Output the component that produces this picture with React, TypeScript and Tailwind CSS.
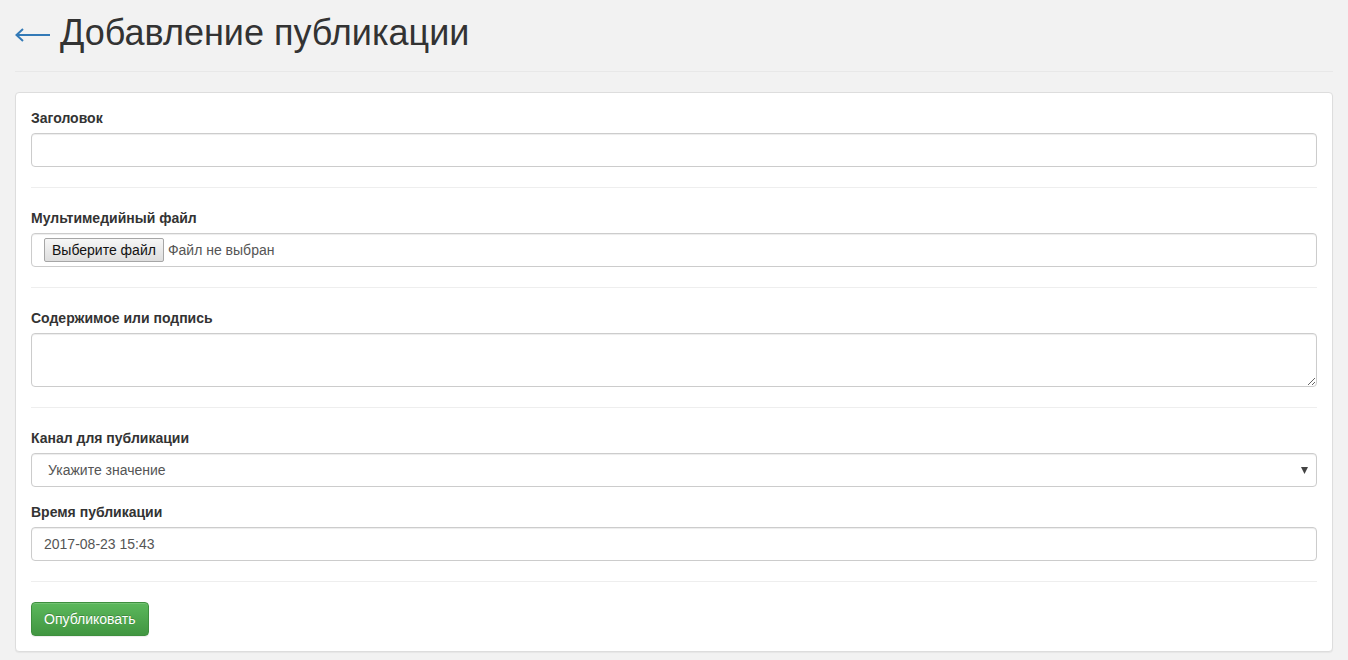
import { useState } from "react";

const inputCls =
  "block w-full h-[34px] px-3 text-[14px] text-[#555] bg-white border border-[#ccc] rounded-[4px] shadow-[inset_0_1px_1px_rgba(0,0,0,0.075)] outline-none focus:border-[#66afe9]";

const Label = ({ children }: { children: React.ReactNode }) => (
  <label className="block mb-[5px] text-[14px] leading-[20px] font-bold text-[#333]">{children}</label>
);

const Divider = () => <hr className="my-5 border-0 border-t border-[#eee]" />;

const App = () => {
  const [title, setTitle] = useState("");
  const [content, setContent] = useState("");
  const [channel, setChannel] = useState("");
  const [time, setTime] = useState("2017-08-23 15:43");

  return (
    <div
      className="min-h-screen bg-[#f2f2f2] px-[15px] pb-2"
      style={{ fontFamily: '"Liberation Sans", Arial, sans-serif' }}
    >
      <div className="flex items-center gap-[10px] pt-[13px] pb-[19px] border-b border-[#e8e8e8]">
        <a href="#" className="text-[#337ab7] pt-1">
          <svg width="35" height="14" viewBox="0 0 35 14" fill="none" stroke="currentColor" strokeWidth="2">
            <path d="M1 7h34" />
            <path d="M8 1L1.5 7 8 13" strokeLinejoin="miter" />
          </svg>
        </a>
        <h1 className="text-[36px] leading-[39px] text-[#333] font-normal">Добавление публикации</h1>
      </div>

      <div className="mt-[20px] bg-white border border-[#ddd] rounded-[4px] shadow-[0_1px_1px_rgba(0,0,0,0.05)] px-[15px] pt-[15px] pb-[15px]">
        <div>
          <Label>Заголовок</Label>
          <input className={inputCls} value={title} onChange={(e) => setTitle(e.target.value)} />
        </div>

        <Divider />

        <div>
          <Label>Мультимедийный файл</Label>
          <div className="flex items-center h-[34px] px-3 bg-white border border-[#ccc] rounded-[4px] shadow-[inset_0_1px_1px_rgba(0,0,0,0.075)] text-[14px]">
            <span className="flex items-center h-[24px] px-[7px] border border-[#a6a6a6] rounded-[2px] bg-gradient-to-b from-[#f6f6f6] to-[#dedede] text-[#111]">
              Выберите файл
            </span>
            <span className="ml-[4px] text-[#555]">Файл не выбран</span>
          </div>
        </div>

        <Divider />

        <div>
          <Label>Содержимое или подпись</Label>
          <textarea
            className="block w-full h-[54px] px-3 py-[6px] text-[14px] text-[#555] bg-white border border-[#ccc] rounded-[4px] shadow-[inset_0_1px_1px_rgba(0,0,0,0.075)] outline-none resize-y"
            value={content}
            onChange={(e) => setContent(e.target.value)}
          />
        </div>

        <Divider />

        <div className="mb-[15px]">
          <Label>Канал для публикации</Label>
          <div className="relative">
            <select
              className={inputCls + " appearance-none pl-4"}
              value={channel}
              onChange={(e) => setChannel(e.target.value)}
            >
              <option value="">Укажите значение</option>
              <option value="1">Основной канал</option>
            </select>
            <svg className="absolute right-[9px] top-[14px] pointer-events-none" width="7" height="7" viewBox="0 0 7 7">
              <path d="M0 0h7L3.5 7z" fill="#444" />
            </svg>
          </div>
        </div>

        <div>
          <Label>Время публикации</Label>
          <input className={inputCls} value={time} onChange={(e) => setTime(e.target.value)} />
        </div>

        <Divider />

        <button
          type="button"
          className="h-[34px] px-3 text-[14px] text-white rounded-[4px] border border-[#3e8f3e] bg-gradient-to-b from-[#5cb85c] to-[#419641] shadow-[inset_0_1px_0_rgba(255,255,255,0.15),0_1px_1px_rgba(0,0,0,0.075)] [text-shadow:0_-1px_0_rgba(0,0,0,0.2)]"
        >
          Опубликовать
        </button>
      </div>
    </div>
  );
};

export default App;
